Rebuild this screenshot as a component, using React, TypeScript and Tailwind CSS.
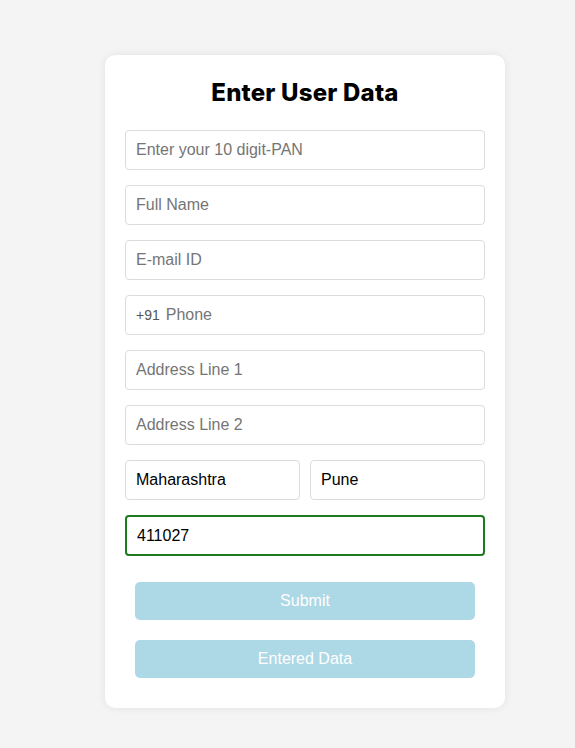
import React from "react";

const inputCls =
  "w-full h-[40px] rounded-[4px] border border-[#dcdcdc] bg-white px-[10px] text-[16px] text-black placeholder:text-[#757575] outline-none";

export default function App() {
  return (
    <div
      className="min-h-[748px] w-full bg-[#f4f4f4] pt-[55px] pl-[105px] flex justify-start"
      style={{ fontFamily: '"Liberation Sans", Arial, sans-serif' }}
    >
      <div className="w-[400px] h-[653px] bg-white rounded-[10px] shadow-[0_0_8px_rgba(0,0,0,0.08)] px-[20px] pt-[20px] pb-[30px] flex flex-col">
        <h2
          className="text-center text-[24px] leading-[36px] font-extrabold text-black mb-[19px]"
          style={{ fontFamily: '"Inter", "Noto Sans", sans-serif', letterSpacing: "0.2px" }}
        >
          Enter User Data
        </h2>
        <div className="flex flex-col gap-[15px]">
          <input className={inputCls} placeholder="Enter your 10 digit-PAN" />
          <input className={inputCls} placeholder="Full Name" />
          <input className={inputCls} placeholder="E-mail ID" />
          <div className="flex items-center h-[40px] rounded-[4px] border border-[#dcdcdc] bg-white pl-[10px]">
            <span className="text-[14px] text-[#555] mr-[6px]">+91</span>
            <input
              className="flex-1 h-full bg-transparent text-[16px] text-black placeholder:text-[#757575] outline-none"
              placeholder="Phone"
            />
          </div>
          <input className={inputCls} placeholder="Address Line 1" />
          <input className={inputCls} placeholder="Address Line 2" />
          <div className="flex gap-[10px]">
            <input className={inputCls} defaultValue="Maharashtra" />
            <input className={inputCls} defaultValue="Pune" />
          </div>
          <input
            className="w-full h-[41px] rounded-[4px] border-2 border-[#1e7a1e] bg-white px-[10px] text-[16px] text-black outline-none"
            defaultValue="411027"
          />
        </div>
        <div className="flex flex-col gap-[20px] px-[10px] mt-[26px]">
          <button className="h-[38px] rounded-[5px] bg-[#add8e6] text-white text-[16px]">Submit</button>
          <button className="h-[38px] rounded-[5px] bg-[#add8e6] text-white text-[16px]">Entered Data</button>
        </div>
      </div>
    </div>
  );
}
